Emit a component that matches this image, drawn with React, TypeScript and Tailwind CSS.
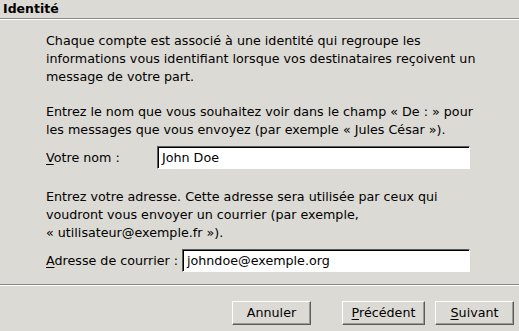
const Btn: React.FC<{ label: string; u?: number; w: string }> = ({ label, u, w }) => (
  <button
    className={`${w} h-[24px] border border-t-white border-l-white border-r-[#5c5c5c] border-b-[#5c5c5c] bg-[#dcdad5] shadow-[inset_-1px_-1px_0_#9d9a94] text-[12.7px] text-black`}
  >
    {u === undefined ? (
      label
    ) : (
      <>
        <span className="underline underline-offset-2">{label[u]}</span>
        {label.slice(u + 1)}
      </>
    )}
  </button>
);

const Field: React.FC<{ value: string; w: string }> = ({ value, w }) => (
  <div
    className={`${w} h-[23px] border border-t-[#5c5c5c] border-l-[#5c5c5c] border-r-white border-b-white bg-white shadow-[inset_1px_1px_0_#000] flex items-center pl-[4px] text-[12.7px] text-black`}
  >
    {value}
  </div>
);

export default function App() {
  return (
    <div
      className="w-[519px] h-[331px] bg-[#dcdad5] text-black flex flex-col"
      style={{ fontFamily: '"DejaVu Sans", sans-serif' }}
    >
      <div className="h-[19px] pl-[3px] flex items-center text-[12.5px] font-bold border-b border-[#8a8985]">
        Identité
      </div>
      <div className="h-px bg-white" />
      <div className="h-[264px] pl-[46px] pt-[12px] text-[12.7px] leading-[18px]">
        <p>
          Chaque compte est associé à une identité qui regroupe les
          <br />
          informations vous identifiant lorsque vos destinataires reçoivent un
          <br />
          message de votre part.
        </p>
        <p className="mt-[17px]">
          Entrez le nom que vous souhaitez voir dans le champ « De : » pour
          <br />
          les messages que vous envoyez (par exemple « Jules César »).
        </p>
        <div className="mt-[7px] flex items-center">
          <span className="w-[111px]">
            <span className="underline underline-offset-2">V</span>otre nom :
          </span>
          <Field value="John Doe" w="w-[313px]" />
        </div>
        <p className="mt-[19px]">
          Entrez votre adresse. Cette adresse sera utilisée par ceux qui
          <br />
          voudront vous envoyer un courrier (par exemple,
          <br />« utilisateur@exemple.fr »).
        </p>
        <div className="mt-[7px] flex items-center">
          <span className="w-[136px]">
            <span className="underline underline-offset-2">A</span>dresse de courrier :
          </span>
          <Field value="johndoe@exemple.org" w="w-[288px]" />
        </div>
      </div>
      <div className="h-px bg-[#8a8985]" />
      <div className="h-px bg-white" />
      <div className="flex-1 flex items-start justify-end pt-[15px] pr-[5px]">
        <Btn label="Annuler" w="w-[79px]" />
        <div className="w-[31px]" />
        <Btn label="Précédent" u={0} w="w-[83px]" />
        <div className="w-[10px]" />
        <Btn label="Suivant" u={0} w="w-[79px]" />
      </div>
    </div>
  );
}
